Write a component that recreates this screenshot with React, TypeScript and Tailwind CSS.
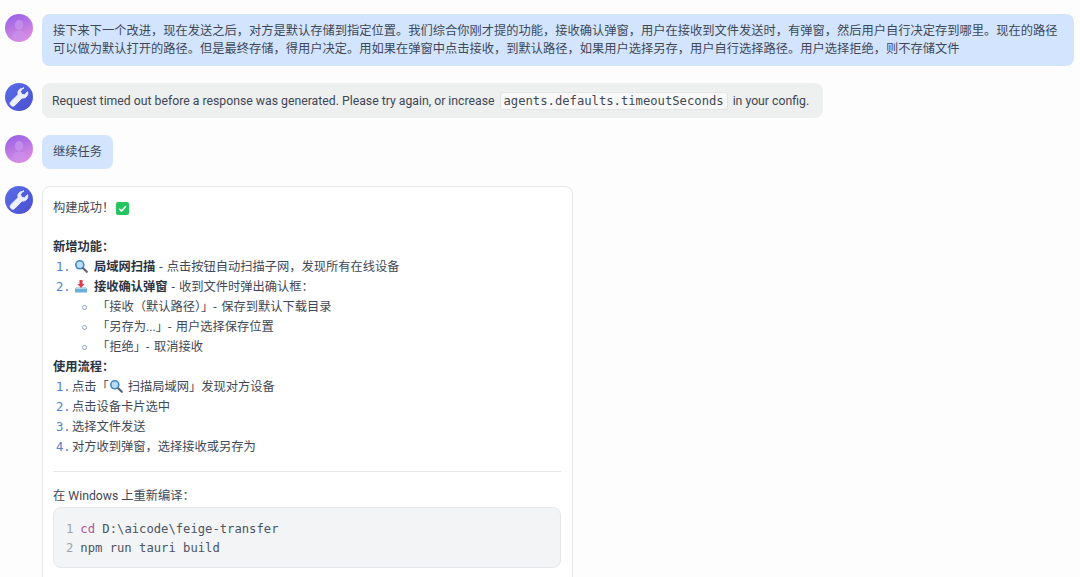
function UserAvatar() {
  return (
    <svg viewBox="0 0 28 28" className="w-7 h-7 shrink-0">
      <defs>
        <linearGradient id="ua" x1="0.3" y1="0" x2="0.7" y2="1">
          <stop offset="0" stopColor="#9a62e6" />
          <stop offset="1" stopColor="#e08fe0" />
        </linearGradient>
      </defs>
      <circle cx="14" cy="14" r="14" fill="url(#ua)" />
      <ellipse cx="14" cy="11" rx="4.200" ry="5" fill="#c792ee" opacity="0.8" />
      <path d="M7 24c0-5 3-7.500 7-7.500s7 2.500 7 7.500c-4 2.500-10 2.500-14 0z" fill="#c792ee" opacity="0.6" />
    </svg>
  );
}

function BotAvatar() {
  return (
    <svg viewBox="0 0 28 28" className="w-7 h-7 shrink-0">
      <defs>
        <linearGradient id="ba" x1="0" y1="0" x2="1" y2="1">
          <stop offset="0" stopColor="#5a6ee8" />
          <stop offset="1" stopColor="#4a4fd0" />
        </linearGradient>
      </defs>
      <circle cx="14" cy="14" r="14" fill="url(#ba)" />
      <path
        d="M18.500 5.500c-2.800-.6-5.500 1.400-5.600 4.300 0 .6.100 1.200.3 1.700L6 18.500c-1.200 1.200-1.100 3 .1 4 1.100 1 2.800.9 3.800-.2l7.100-7.400c2.900.7 5.900-1.500 5.800-4.800 0-.5-.1-1-.2-1.400l-3.300 3.200-3-.8-.8-2.900 3-3.700z"
        fill="#eef1fd"
        stroke="#eef1fd"
        strokeWidth="1"
      />
    </svg>
  );
}

function Magnifier() {
  return (
    <svg viewBox="0 0 14 14" className="inline-block w-[14px] h-[14px] align-[-2px] mr-[2px]">
      <circle cx="5.800" cy="5.800" r="4.800" fill="#3b88c3" />
      <circle cx="5.800" cy="5.800" r="3.200" fill="#bbddf5" />
      <path d="M9.200 9.200l3.600 3.600" stroke="#5c6670" strokeWidth="2.200" strokeLinecap="round" />
    </svg>
  );
}

function InboxTray() {
  return (
    <svg viewBox="0 0 14 14" className="inline-block w-[14px] h-[14px] align-[-2px] mr-[2px]">
      <path d="M2 8.500h10l1 1.500v3.500H1V10z" fill="#6baed6" />
      <path d="M3 8.500h8l1.500 1.500h-11z" fill="#bcd9ea" />
      <path d="M5.500 1h3v4h2L7 9 3.500 5h2z" fill="#dd3b4a" />
    </svg>
  );
}

function CheckBox() {
  return (
    <svg viewBox="0 0 13 13" className="inline-block w-[13px] h-[13px] align-[-2px]">
      <rect width="13" height="13" rx="2" fill="#22c55e" />
      <path d="M3.200 6.800l2.300 2.300 4.300-4.800" stroke="#fff" strokeWidth="1.500" fill="none" />
    </svg>
  );
}

function Num({ n }: { n: number }) {
  return <span className="w-[19px] pl-[3px] shrink-0 font-['DejaVu_Sans_Mono',monospace] text-[12.2px] text-[#4f80d0]">{n}.</span>;
}

export default function App() {
  return (
    <div className="h-[577px] overflow-hidden bg-[#fdfdfd] pt-[14px] pl-[5px] pr-[6px] flex flex-col gap-[17px] text-[12.25px] leading-[18px] text-[#3f4856] font-['Roboto','Noto_Sans_CJK_SC',sans-serif]">
      <div className="flex gap-[9px]">
        <UserAvatar />
        <div className="bg-[#d2e4fe] rounded-lg px-[11px] py-2 w-full">
          接下来下一个改进，现在发送之后，对方是默认存储到指定位置。我们综合你刚才提的功能，接收确认弹窗，用户在接收到文件发送时，有弹窗，然后用户自行决定存到哪里。现在的路径可以做为默认打开的路径。但是最终存储，得用户决定。用如果在弹窗中点击接收，到默认路径，如果用户选择另存，用户自行选择路径。用户选择拒绝，则不存储文件
        </div>
      </div>

      <div className="flex gap-[9px]">
        <BotAvatar />
        <div className="bg-[#eeefef] rounded-lg pl-[10px] pr-[14px] h-[35px] flex items-center gap-[5px] whitespace-nowrap">
          <span>Request timed out before a response was generated. Please try again, or increase</span>
          <code className="bg-[#f8f8f8] border border-[#e3e4e6] rounded-[3px] px-[3px] font-['DejaVu_Sans_Mono',monospace] text-[12.2px] leading-[16px]">agents.defaults.timeoutSeconds</code>
          <span>in your config.</span>
        </div>
      </div>

      <div className="flex gap-[9px]">
        <UserAvatar />
        <div className="bg-[#d2e4fe] rounded-lg px-[11px] py-2">继续任务</div>
      </div>

      <div className="flex gap-[9px]">
        <BotAvatar />
        <div className="w-[531px] shrink-0 bg-white border border-[#e5e7eb] rounded-lg pl-[10px] pr-[11px] pt-[11px] pb-8 leading-[20px]">
          <div className="flex items-center gap-[2px]">
            构建成功！ <CheckBox />
          </div>
          <div className="mt-[19px] font-semibold text-[#2b3442]">新增功能：</div>
          <div className="flex">
            <Num n={1} />
            <span className="whitespace-nowrap pl-[2px] [word-spacing:1px]"><Magnifier /> <b className="font-semibold text-[#2b3442]">局域网扫描</b> - 点击按钮自动扫描子网，发现所有在线设备</span>
          </div>
          <div className="flex">
            <Num n={2} />
            <span className="whitespace-nowrap pl-[2px] [word-spacing:1px]"><InboxTray /> <b className="font-semibold text-[#2b3442]">接收确认弹窗</b> - 收到文件时弹出确认框：</span>
          </div>
          <ul className="pl-[29px]">
            {["「接收（默认路径）」- 保存到默认下载目录", "「另存为...」- 用户选择保存位置", "「拒绝」- 取消接收"].map((t) => (
              <li key={t} className="flex items-center [word-spacing:1.5px]">
                <span className="w-[5px] h-[5px] rounded-full border border-[#8aa8e0] mr-[10px] shrink-0" />
                <span className="whitespace-pre">{t}</span>
              </li>
            ))}
          </ul>
          <div className="font-semibold text-[#2b3442]">使用流程：</div>
          {[
            <>点击「<Magnifier /> 扫描局域网」发现对方设备</>,
            <>点击设备卡片选中</>,
            <>选择文件发送</>,
            <>对方收到弹窗，选择接收或另存为</>,
          ].map((c, i) => (
            <div key={i} className="flex">
              <Num n={i + 1} />
              <span>{c}</span>
            </div>
          ))}
          <div className="border-t border-[#e5e7eb] mt-[14px] mb-[14px]" />
          <div>在 Windows 上重新编译：</div>
          <div className="mt-[1px] bg-[#f3f4f6] border border-[#e5e7eb] rounded-lg pl-[12px] pt-[12px] h-[61px] font-['DejaVu_Sans_Mono',monospace] text-[12.2px] leading-[19px] text-[#4b5563]">
            <div><span className="text-[#9ca3af] mr-[7px]">1</span><span className="text-[#b5529f]">cd</span> D:\aicode\feige-transfer</div>
            <div><span className="text-[#9ca3af] mr-[7px]">2</span>npm run tauri build</div>
          </div>
        </div>
      </div>
    </div>
  );
}
